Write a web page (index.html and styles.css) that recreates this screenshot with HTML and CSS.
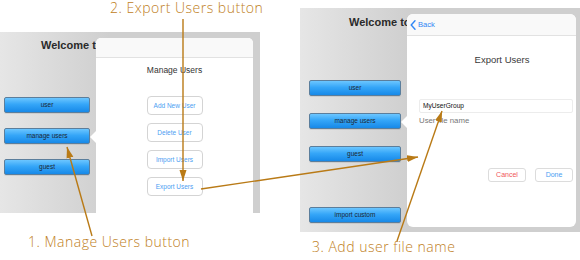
FILE: index.html
```html
<!DOCTYPE html>
<html>
<head>
<meta charset="utf-8">
<link rel="stylesheet" href="styles.css">
</head>
<body>
<div class="canvas">
  <div class="shot shot-a">
    <div class="home home-a">
      <div class="welcome">Welcome to</div>
      <div class="menu menu-a">
        <div class="mbtn">user</div>
        <div class="mbtn">manage users</div>
        <div class="mbtn">guest</div>
      </div>
    </div>
    <div class="pop pop-a">
      <div class="pop-head"></div>
      <div class="pop-body">
        <div class="title-a">Manage Users</div>
        <div class="actions">
          <div class="abtn">Add New User</div>
          <div class="abtn">Delete User</div>
          <div class="abtn">Import Users</div>
          <div class="abtn">Export Users</div>
        </div>
      </div>
    </div>
  </div>

  <div class="shot shot-b">
    <div class="home home-b">
      <div class="welcome">Welcome to</div>
      <div class="menu menu-b">
        <div class="mbtn">user</div>
        <div class="mbtn">manage users</div>
        <div class="mbtn">guest</div>
        <div class="mbtn import">import custom</div>
      </div>
    </div>
    <div class="pop pop-b">
      <div class="pop-head head-b">
        <svg class="chev" width="6" height="10" viewBox="0 0 6 10"><path d="M5 0.8 L1.2 5 L5 9.2" fill="none" stroke="#2f86f5" stroke-width="1.4" stroke-linecap="round" stroke-linejoin="round"/></svg>
        <span class="back">Back</span>
      </div>
      <div class="pop-body body-b">
        <div class="title-b">Export Users</div>
        <div class="field">MyUserGroup</div>
        <div class="hint">User file name</div>
        <div class="row">
          <div class="rbtn cancel">Cancel</div>
          <div class="rbtn done">Done</div>
        </div>
      </div>
    </div>
  </div>

  <div class="note note-2">2. Export Users button</div>
  <div class="note note-1">1. Manage Users button</div>
  <div class="note note-3">3. Add user file name</div>

  <svg class="arrows" width="580" height="260" viewBox="0 0 580 260">
    <defs>
      <marker id="ah" markerUnits="userSpaceOnUse" markerWidth="12" markerHeight="8" refX="11" refY="4" orient="auto">
        <path d="M0 0.5 L11 4 L0 7.5 Z" fill="#b97a16"/>
      </marker>
    </defs>
    <g stroke="#b97a16" stroke-width="1.4" fill="none">
      <line x1="92" y1="236" x2="67" y2="147" marker-end="url(#ah)"/>
      <line x1="183" y1="19" x2="183" y2="181" marker-end="url(#ah)"/>
      <line x1="201" y1="189" x2="418" y2="157" marker-end="url(#ah)"/>
      <line x1="397" y1="241" x2="442" y2="111" marker-end="url(#ah)"/>
    </g>
  </svg>
</div>
</body>
</html>
```

FILE: styles.css
```css
* { box-sizing: border-box; }
html, body { margin: 0; padding: 0; background: #fff; }
body { font-family: "Liberation Sans", Arial, sans-serif; }

.canvas {
  position: relative;
  width: 580px;
  height: 260px;
  display: flex;
  align-items: flex-start;
  gap: 40px;
  overflow: hidden;
}

.shot {
  position: relative;
  overflow: hidden;
  background: #d0d0d0;
}
.shot-a { width: 260px; height: 181px; margin-top: 32px; }
.shot-b { width: 280px; height: 224px; margin-top: 8px; }

.home {
  height: 100%;
  background: linear-gradient(90deg, #e6e6e6 0%, #d9d9d9 60px, #cfcfcf 110px, #cfcfcf 100%);
  display: flex;
  flex-direction: column;
}

.welcome {
  font-size: 11px;
  font-weight: bold;
  color: #2a2a2a;
  line-height: 13px;
  white-space: nowrap;
}
.home-a .welcome { padding: 7px 0 0 41px; }
.home-b .welcome { padding: 8px 0 0 49px; }

.menu { display: flex; flex-direction: column; }
.menu-a { margin: 45px 0 0 4px; width: 86px; gap: 15px; }
.menu-b { margin: 51px 0 0 9px; width: 92px; gap: 17px; }
.menu-b .import { margin-top: 28px; }

.mbtn {
  height: 16px;
  border: 1px solid #5b7e9c;
  border-radius: 2px;
  background: linear-gradient(180deg, #6cc6ff 0%, #35a6f8 45%, #1789e8 100%);
  color: #1d2733;
  font-size: 6.5px;
  line-height: 14px;
  text-align: center;
  box-shadow: 0 1px 0 rgba(0,0,0,0.08);
}

.pop {
  position: absolute;
  background: #fff;
  display: flex;
  flex-direction: column;
}
.pop-a { left: 96px; top: 6px; width: 157px; height: 190px; border-radius: 5px 5px 0 0; }
.pop-b { left: 107px; top: 6px; width: 169px; height: 213px; border-radius: 6px; }

.pop::before {
  content: "";
  position: absolute;
  left: -6px;
  width: 0; height: 0;
  border-top: 6px solid transparent;
  border-bottom: 6px solid transparent;
  border-right: 6px solid #fff;
}
.pop-a::before { top: 93px; }
.pop-b::before { top: 102px; }

.pop-head {
  height: 20px;
  background: #f9f9f9;
  border-bottom: 1px solid #e2e2e2;
  border-radius: inherit;
  border-bottom-left-radius: 0;
  border-bottom-right-radius: 0;
  flex: none;
}
.head-b {
  height: 22px;
  display: flex;
  align-items: center;
  padding-left: 3px;
  gap: 2px;
}
.chev { display: block; }
.back { font-size: 7.6px; color: #2f86f5; line-height: 10px; }

.pop-body { display: flex; flex-direction: column; align-items: center; }

.title-a {
  margin-top: 7px;
  font-size: 8.5px;
  line-height: 10px;
  color: #333;
}
.actions {
  margin-top: 21px;
  display: flex;
  flex-direction: column;
  gap: 8px;
}
.abtn {
  width: 56px;
  height: 19px;
  border: 1px solid #d4d4d4;
  border-radius: 4px;
  font-size: 6.5px;
  line-height: 17px;
  text-align: center;
  color: #4b9ef2;
  background: #fff;
}

.body-b { align-items: stretch; padding: 0 3px 0 12px; }
.title-b {
  margin-top: 18px;
  font-size: 9.5px;
  line-height: 12px;
  color: #3a3a3a;
  text-align: center;
  padding-left: 12px;
}
.field {
  margin-top: 33px;
  height: 14px;
  border: 1px solid #ececec;
  border-radius: 2px;
  font-size: 6.6px;
  line-height: 12px;
  padding-left: 3px;
  color: #111;
}
.hint {
  margin-top: 3px;
  font-size: 7.8px;
  line-height: 10px;
  color: #777;
}
.row {
  margin-top: 42px;
  display: flex;
  justify-content: flex-end;
  gap: 9px;
}
.rbtn {
  width: 38px;
  height: 14px;
  border: 1px solid #dcdcdc;
  border-radius: 3px;
  font-size: 7px;
  line-height: 12px;
  text-align: center;
}
.cancel { color: #f0555a; }
.done { color: #4b9ef2; }

.note {
  position: absolute;
  font-family: "Open Sans", "Liberation Sans", sans-serif;
  font-weight: 300;
  font-size: 14px;
  line-height: 15px;
  letter-spacing: 0.5px;
  color: #c0801c;
  white-space: nowrap;
}
.note-2 { left: 110px; top: 0; }
.note-1 { left: 28px; top: 234px; }
.note-3 { left: 312px; top: 239px; }

.arrows { position: absolute; left: 0; top: 0; pointer-events: none; }
```
